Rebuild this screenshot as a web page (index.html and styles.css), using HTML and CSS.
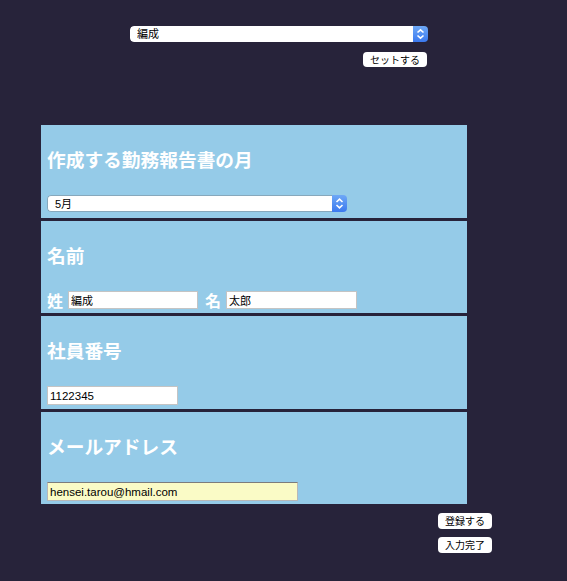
FILE: index.html
```html
<!DOCTYPE html>
<html lang="ja">
<head>
<meta charset="utf-8">
<title>勤務報告書</title>
<link rel="stylesheet" href="styles.css">
</head>
<body>
<div class="top">
  <div class="sel sel-top">
    <select class="sel-box"><option>編成</option></select>
    <span class="sel-arrow"><svg width="15" height="16" viewBox="0 0 15 16"><path d="M4.5 6.5 L7.5 3.8 L10.5 6.5 M4.5 9.5 L7.5 12.2 L10.5 9.5" fill="none" stroke="#fff" stroke-width="1.6"/></svg></span>
  </div>
  <div class="set-row"><button class="btn btn-set">セットする</button></div>
</div>

<div class="panel">
  <section class="sec sec-a">
    <h3 class="ttl">作成する勤務報告書の月</h3>
    <div class="sel sel-month">
      <select class="sel-box sel-box-bordered"><option>5月</option></select>
      <span class="sel-arrow"><svg width="15" height="17" viewBox="0 0 15 17"><path d="M4.5 7 L7.5 4.2 L10.5 7 M4.5 10 L7.5 12.8 L10.5 10" fill="none" stroke="#fff" stroke-width="1.6"/></svg></span>
    </div>
  </section>
  <section class="sec sec-b">
    <h3 class="ttl">名前</h3>
    <div class="name-row">
      <span class="lbl">姓</span>
      <input class="inp inp-name" type="text" value="編成">
      <span class="lbl lbl-2">名</span>
      <input class="inp inp-name2" type="text" value="太郎">
    </div>
  </section>
  <section class="sec sec-a">
    <h3 class="ttl">社員番号</h3>
    <input class="inp inp-no" type="text" value="1122345">
  </section>
  <section class="sec sec-b">
    <h3 class="ttl">メールアドレス</h3>
    <input class="inp inp-mail" type="text" value="hensei.tarou@hmail.com">
  </section>
</div>

<div class="actions">
  <button class="btn btn-act">登録する</button>
  <button class="btn btn-act">入力完了</button>
</div>
</body>
</html>
```

FILE: styles.css
```css
html, body {
  margin: 0;
  padding: 0;
  background: #27233a;
}
body {
  font-family: "Liberation Sans", "Noto Sans CJK JP", sans-serif;
  color: #000;
  min-height: 581px;
}
.top {
  width: 298px;
  margin-left: 130px;
  padding-top: 26px;
}
.sel {
  display: flex;
  border-radius: 4px;
  overflow: hidden;
}
.sel-top { height: 16px; }
.sel-month { width: 300px; height: 17px; }
.sel-box {
  appearance: none;
  -webkit-appearance: none;
  flex: 1;
  min-width: 0;
  height: 100%;
  margin: 0;
  border: none;
  border-radius: 4px 0 0 4px;
  background: #fff;
  padding: 0 0 0 7px;
  font-family: "Liberation Sans", "Noto Sans CJK JP", sans-serif;
  font-size: 11px;
  color: #000;
  outline: none;
}
.sel-box-bordered {
  border: 1px solid #87a8bc;
  border-right: none;
  padding-left: 7px;
}
.sel-arrow {
  width: 15px;
  height: 100%;
  display: flex;
  align-items: center;
  justify-content: center;
  background: linear-gradient(#6ea8f6, #3b79ef);
}
.sel-arrow svg { display: block; }
.set-row {
  display: flex;
  justify-content: flex-end;
  padding-right: 1px;
  margin-top: 10px;
}
.btn {
  margin: 0;
  padding: 0;
  border: none;
  border-radius: 4px;
  background: #fff;
  color: #000;
  font-family: "Noto Sans CJK JP", sans-serif;
  font-size: 10px;
  line-height: 1;
  display: flex;
  align-items: center;
  justify-content: center;
}
.btn-set { width: 64px; height: 15px; }
.panel {
  margin-left: 41px;
  margin-top: 58px;
  width: 426px;
  display: flex;
  flex-direction: column;
  gap: 3px;
}
.sec {
  background: #95cbe8;
  padding: 23px 6px 0;
  box-sizing: border-box;
}
.sec-a { height: 93px; }
.sec-b { height: 92px; }
.ttl {
  margin: 0 0 25px;
  font-family: "Noto Sans CJK JP", sans-serif;
  font-size: 18.72px;
  line-height: 22px;
  font-weight: 700;
  color: #fff;
}
.name-row {
  display: flex;
  align-items: center;
  height: 18px;
}
.lbl {
  font-family: "Noto Sans CJK JP", sans-serif;
  font-size: 16px;
  font-weight: 700;
  color: #fff;
  line-height: 18px;
  margin-right: 5px;
}
.lbl-2 { margin-left: 7px; }
.inp {
  display: block;
  box-sizing: border-box;
  margin: 0;
  border: 1px solid #c4c4c4;
  background: #fff;
  padding: 0 2px;
  font-family: "Liberation Sans", "Noto Sans CJK JP", sans-serif;
  font-size: 11.5px;
  color: #000;
  outline: none;
}
.inp-name { width: 130px; height: 18px; font-size: 11px; }
.inp-name2 { width: 131px; height: 18px; font-size: 11px; }
.inp-no { width: 131px; height: 19px; }
.inp-mail {
  width: 251px;
  height: 19px;
  background: #fafbc6;
  border-color: #b8b8b8;
  border-top-color: #7c7c7c;
}
.actions {
  margin-left: 438px;
  margin-top: 9px;
  display: flex;
  flex-direction: column;
  gap: 8px;
}
.btn-act { width: 54px; height: 16px; }
```
